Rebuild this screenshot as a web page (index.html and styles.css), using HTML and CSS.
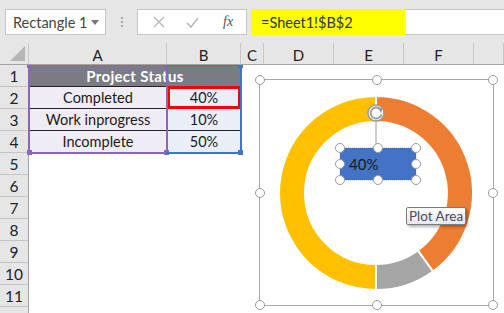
FILE: index.html
```html
<!DOCTYPE html>
<html>
<head>
<meta charset="utf-8">
<link rel="stylesheet" href="styles.css">
</head>
<body>
<div class="app">
  <div class="toolbar">
    <div class="namebox"><span class="name">Rectangle 1</span><svg class="caret" width="8" height="5" viewBox="0 0 8 5"><path d="M0 0H8L4 5Z" fill="#777"/></svg></div>
    <div class="dots"><i></i><i></i><i></i></div>
    <div class="fxbox">
      <svg width="12" height="12" viewBox="0 0 12 12"><path d="M1 1L11 11M11 1L1 11" stroke="#b9b9b9" stroke-width="1.4"/></svg>
      <svg width="13" height="11" viewBox="0 0 13 11"><path d="M1 6L5 10L12 1" stroke="#b9b9b9" stroke-width="1.6" fill="none"/></svg>
      <span class="fx">fx</span>
    </div>
    <div class="formula">=Sheet1!$B$2</div>
    <div class="formula-rest"></div>
  </div>
  <div class="sheet">
    <div class="row head">
      <div class="corner"><svg width="15" height="15" viewBox="0 0 15 15"><path d="M15 0V15H0Z" fill="#b5b5b5"/></svg></div>
      <div class="ch">A</div><div class="ch">B</div><div class="ch">C</div><div class="ch">D</div><div class="ch">E</div><div class="ch">F</div><div class="ch"></div>
    </div>
    <div class="row"><div class="rh">1</div><div class="c title">Project Status</div><div class="c"></div><div class="c"></div><div class="c"></div><div class="c"></div><div class="c"></div></div>
    <div class="row"><div class="rh">2</div><div class="c la">Completed</div><div class="c lb sel">40%</div><div class="c"></div><div class="c"></div><div class="c"></div><div class="c"></div><div class="c"></div></div>
    <div class="row"><div class="rh">3</div><div class="c la">Work inprogress</div><div class="c lb">10%</div><div class="c"></div><div class="c"></div><div class="c"></div><div class="c"></div><div class="c"></div></div>
    <div class="row"><div class="rh">4</div><div class="c la">Incomplete</div><div class="c lb">50%</div><div class="c"></div><div class="c"></div><div class="c"></div><div class="c"></div><div class="c"></div></div>
    <div class="row"><div class="rh">5</div></div>
    <div class="row"><div class="rh">6</div></div>
    <div class="row"><div class="rh">7</div></div>
    <div class="row"><div class="rh">8</div></div>
    <div class="row"><div class="rh">9</div></div>
    <div class="row"><div class="rh">10</div></div>
    <div class="row"><div class="rh">11</div></div>
    <div class="row"><div class="rh"></div></div>

    <div class="range range-a"><i class="h tl"></i><i class="h tr"></i><i class="h bl"></i><i class="h br"></i></div>
    <div class="range range-b"><i class="h tr"></i><i class="h br"></i></div>

    <div class="chart">
      <svg class="donut" width="235" height="227" viewBox="0 0 235 227">
        <path d="M117 17A97 97 0 0 1 174.01 192.47L158.73 171.44A71 71 0 0 0 117 43Z" fill="#ed7d31" stroke="#fff" stroke-width="2"/>
        <path d="M174.01 192.47A97 97 0 0 1 117 211L117 185A71 71 0 0 0 158.73 171.44Z" fill="#a5a5a5" stroke="#fff" stroke-width="2"/>
        <path d="M117 211A97 97 0 0 1 117 17L117 43A71 71 0 0 0 117 185Z" fill="#ffc000" stroke="#fff" stroke-width="2"/>
        <line x1="117" y1="42" x2="117" y2="68" stroke="#9a9a9a" stroke-width="1"/>
        <circle cx="117" cy="34" r="8" fill="#fff" stroke="#9a9a9a" stroke-width="1.5"/>
        <path d="M121 30A5.5 5.5 0 1 0 122.5 35.5" fill="none" stroke="#9a9a9a" stroke-width="1.8"/>
        <path d="M118.5 28.5L124 29L122 34Z" fill="#9a9a9a"/>
      </svg>
      <i class="k" style="left:0;top:0"></i><i class="k" style="left:50%;top:0"></i><i class="k" style="left:100%;top:0"></i>
      <i class="k" style="left:0;top:50%"></i><i class="k" style="left:100%;top:50%"></i>
      <i class="k" style="left:0;top:100%"></i><i class="k" style="left:50%;top:100%"></i><i class="k" style="left:100%;top:100%"></i>
      <div class="tbox">
        <span>40%</span>
        <i class="k" style="left:0;top:0"></i><i class="k" style="left:50%;top:0"></i><i class="k" style="left:100%;top:0"></i>
        <i class="k" style="left:0;top:50%"></i><i class="k" style="left:100%;top:50%"></i>
        <i class="k" style="left:0;top:100%"></i><i class="k" style="left:50%;top:100%"></i><i class="k" style="left:100%;top:100%"></i>
      </div>
      <div class="tip">Plot Area</div>
    </div>
  </div>
</div>
</body>
</html>
```

FILE: styles.css
```css
* { box-sizing: border-box; }
html, body { margin: 0; padding: 0; }
body {
  width: 504px;
  height: 313px;
  overflow: hidden;
  background: #fff;
  font-family: Lato, "Liberation Sans", sans-serif;
  color: #1b1b1b;
}
.app { width: 504px; height: 313px; display: flex; flex-direction: column; overflow: hidden; }

.toolbar {
  height: 43px;
  flex: none;
  background: #e6e6e6;
  display: flex;
  align-items: flex-start;
  padding: 9px 0 0 5px;
}
.namebox {
  width: 101px;
  height: 26px;
  background: #fff;
  border: 1px solid #c6c6c6;
  display: flex;
  align-items: center;
  justify-content: space-between;
  padding: 0 6px 0 7px;
  font-size: 14.5px;
  color: #444;
}
.caret { margin-top: 1px; }
.dots {
  width: 31px;
  height: 26px;
  display: flex;
  flex-direction: column;
  align-items: center;
  justify-content: center;
  gap: 2px;
}
.dots i { width: 2px; height: 2px; background: #a8a8a8; display: block; }
.fxbox {
  width: 110px;
  height: 26px;
  background: #fff;
  border: 1px solid #c6c6c6;
  display: flex;
  align-items: center;
  padding: 0 0 0 15px;
  gap: 21px;
}
.fx {
  font-family: "Liberation Serif", serif;
  font-style: italic;
  font-size: 14px;
  color: #555;
  margin-left: 3px;
}
.formula {
  margin-left: 4px;
  width: 154px;
  height: 26px;
  background: #ffff00;
  display: flex;
  align-items: center;
  padding-left: 10px;
  font-size: 14.5px;
  color: #333;
}
.formula-rest {
  flex: 1;
  height: 26px;
  background: #fff;
  border-top: 1px solid #c6c6c6;
  border-bottom: 1px solid #c6c6c6;
}

.sheet { position: relative; flex: 1; overflow: hidden; }
.row {
  display: grid;
  grid-template-columns: 29px 138px 74px 23px 70px 70px 70px 30px;
  height: 22px;
}
.row.head { background: #e6e6e6; border-bottom: 1px solid #a3a3a3; }
.corner { display: flex; align-items: flex-end; justify-content: flex-end; padding: 0 3px 3px 0; border-right: 1px solid #c8c8c8; }
.ch {
  border-right: 1px solid #c8c8c8;
  display: flex;
  align-items: center;
  justify-content: center;
  font-size: 15px;
  color: #222;
  padding-top: 2px;
}
.rh {
  background: #e6e6e6;
  border-right: 1px solid #a3a3a3;
  border-bottom: 1px solid #c4c4c4;
  display: flex;
  align-items: center;
  justify-content: center;
  font-size: 15.5px;
  color: #222;
}
.c {
  display: flex;
  align-items: center;
  justify-content: center;
  font-size: 14.5px;
}
.c.title {
  grid-column: span 2;
  background: #7b7b83;
  color: #fff;
  font-weight: bold;
  font-size: 15px;
  border-bottom: 1px solid #222;
  letter-spacing: 0.3px;
}
.c.la { background: #efecf6; border-bottom: 1px solid #222; }
.c.lb { background: #e9eef8; border-bottom: 1px solid #222; }
.c.sel { border: 3px solid #ff0000; margin-top: -1px; }

.range { position: absolute; pointer-events: none; }
.range-a {
  left: 28px; top: 22px; width: 140px; height: 89px;
  border: 2px solid #8a64bf;
  border-top-width: 1px;
}
.range-b {
  left: 166px; top: 22px; width: 76px; height: 89px;
  border: 2px solid #4472c4;
  border-top-width: 1px;
  border-left: none;
}
.h { position: absolute; width: 5px; height: 5px; display: block; }
.range-a .h { background: #8a64bf; }
.range-b .h { background: #4472c4; }
.h.tl { left: -3px; top: -3px; }
.h.tr { right: -3px; top: -3px; }
.h.bl { left: -3px; bottom: -3px; }
.h.br { right: -3px; bottom: -3px; }
.range-a .h.tl, .range-a .h.tr, .range-b .h.tr { height: 3px; top: -1px; }

.chart {
  position: absolute;
  left: 259px; top: 36px;
  width: 235px; height: 227px;
  border: 1px solid #a6a6a6;
  background: #fff;
}
.donut { position: absolute; left: -1px; top: -1px; }
.k {
  position: absolute;
  display: block;
  width: 10px; height: 10px;
  margin: -5px 0 0 -5px;
  border-radius: 50%;
  background: #fff;
  border: 1.5px solid #9a9a9a;
}
.tbox {
  position: absolute;
  left: 80px; top: 68px;
  width: 76px; height: 32px;
  background: #4472c4;
  outline: 1px dotted #c9d4ea;
  display: flex;
  align-items: center;
  padding-left: 9px;
  font-size: 15px;
  color: #1a1a1a;
}
.tip {
  position: absolute;
  left: 146px; top: 127px;
  width: 60px; height: 18px;
  background: linear-gradient(#ffffff, #e6e7f0);
  border: 1px solid #7a7a7a;
  border-radius: 2px;
  box-shadow: 2px 2px 3px rgba(0,0,0,0.3);
  font-size: 13.5px;
  color: #4a4a60;
  display: flex;
  align-items: center;
  justify-content: center;
}
```
